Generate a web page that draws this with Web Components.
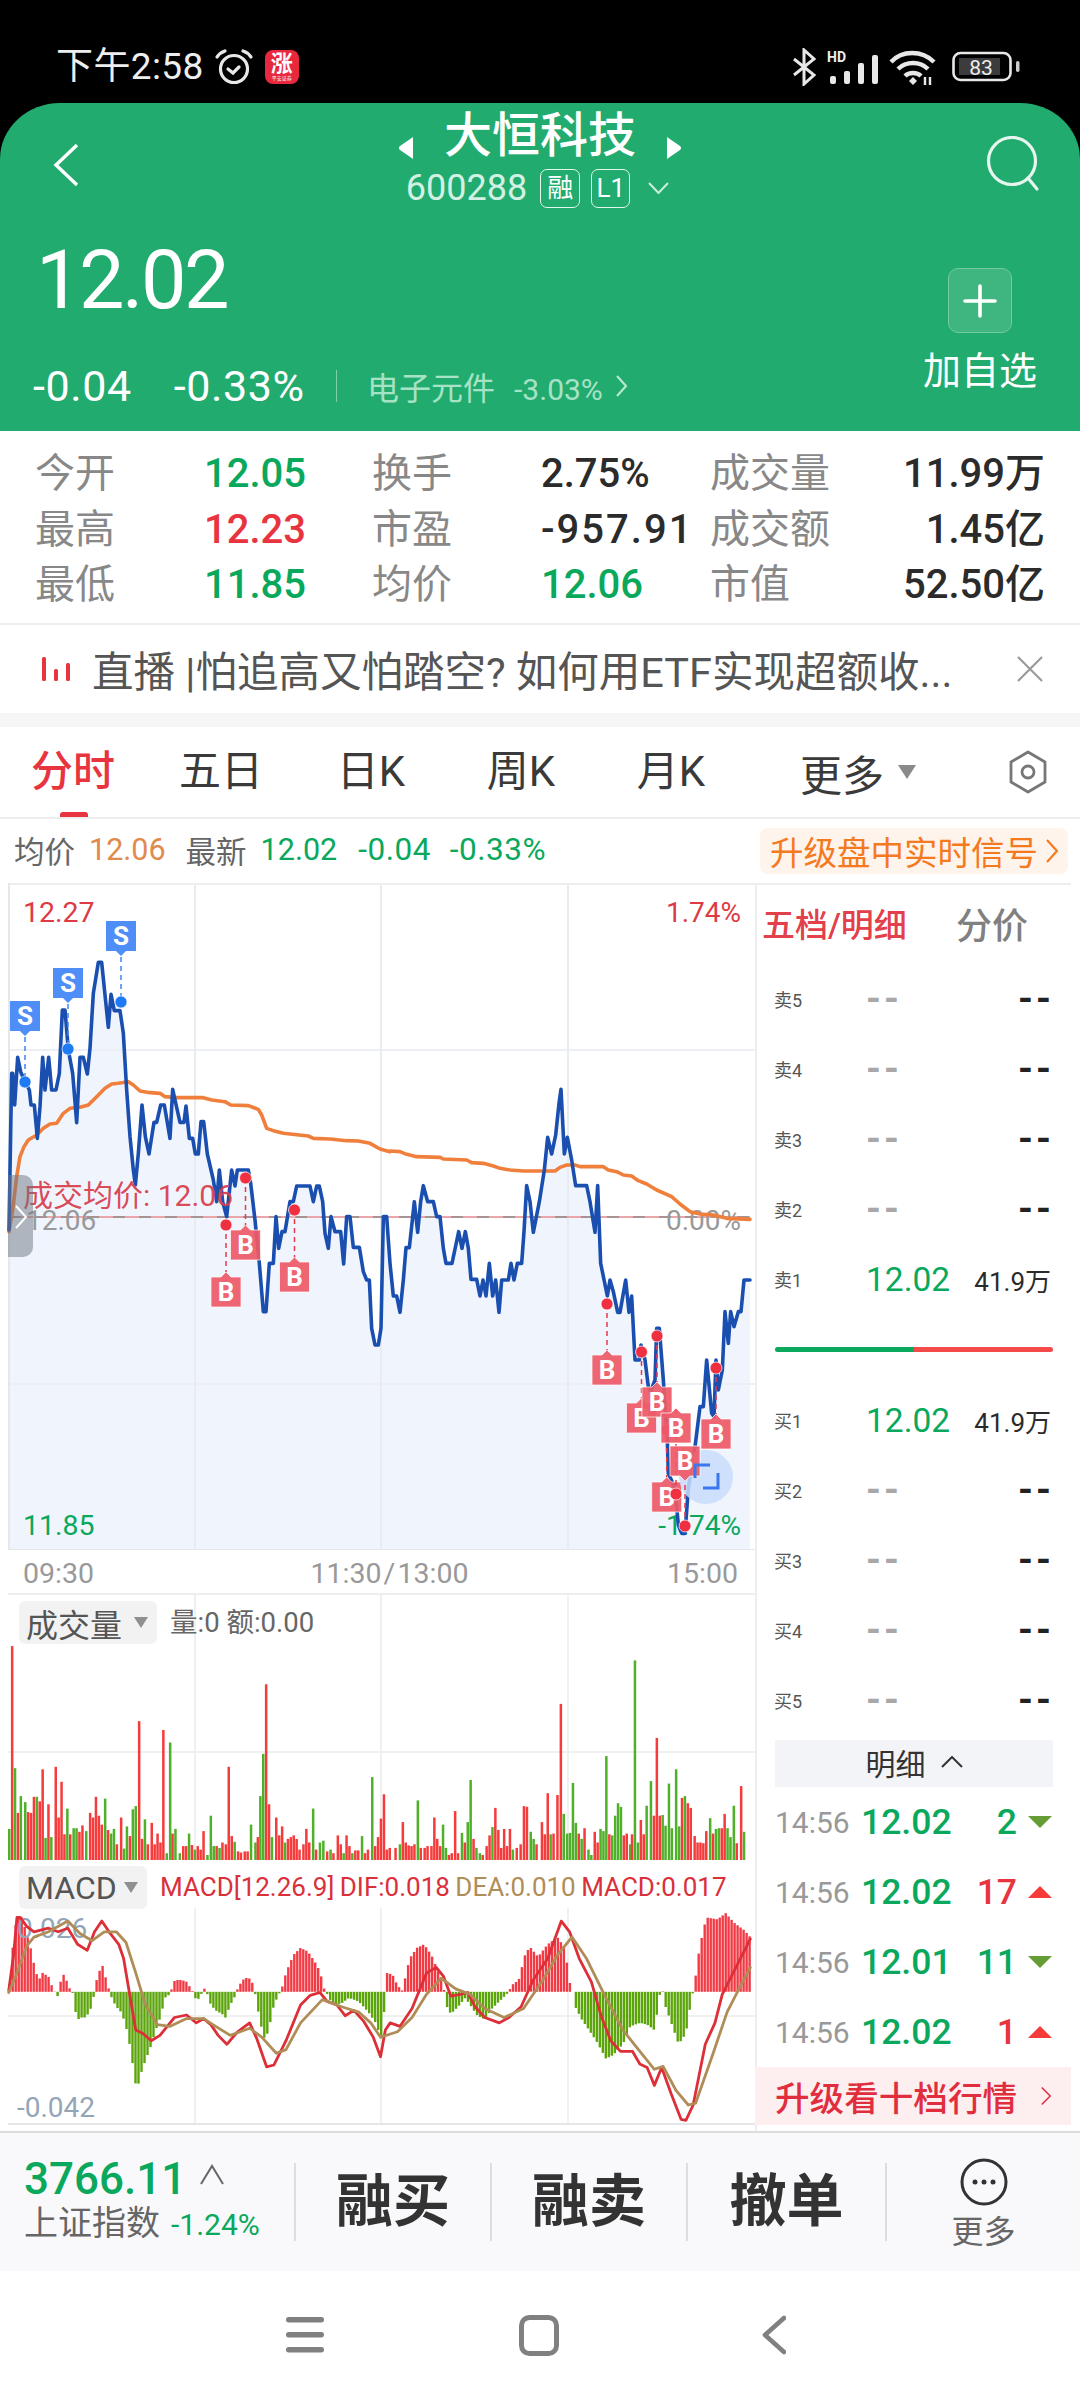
<!DOCTYPE html>
<html lang="zh">
<head>
<meta charset="utf-8">
<title>大恒科技</title>
<style>
html,body{margin:0;padding:0;background:#fff;width:1080px;height:2400px;overflow:hidden}
body{font-family:Roboto,"Noto Sans CJK SC",sans-serif}
</style>
</head>
<body>
<status-bar></status-bar>
<stock-header></stock-header>
<quote-grid>
   <quote-cell label="今开" tone="green">12.05</quote-cell>
   <quote-cell label="换手">2.75%</quote-cell>
   <quote-cell label="成交量" end>11.99万</quote-cell>
   <quote-cell label="最高" tone="red">12.23</quote-cell>
   <quote-cell label="市盈"><span style="letter-spacing:2px">-957.91</span></quote-cell>
   <quote-cell label="成交额" end>1.45亿</quote-cell>
   <quote-cell label="最低" tone="green">11.85</quote-cell>
   <quote-cell label="均价" tone="green">12.06</quote-cell>
   <quote-cell label="市值" end>52.50亿</quote-cell>
</quote-grid>
<news-ticker>直播 |怕追高又怕踏空? 如何用ETF实现超额收...</news-ticker>
<chart-tabs>
   <tab-item active>分时</tab-item>
   <tab-item>五日</tab-item>
   <tab-item>日K</tab-item>
   <tab-item>周K</tab-item>
   <tab-item>月K</tab-item>
</chart-tabs>
<info-row></info-row>
<chart-body>
   <div slot="left">
      <price-chart></price-chart>
      <time-axis></time-axis>
      <volume-chart></volume-chart>
      <macd-chart></macd-chart>
   </div>
   <order-book slot="right"></order-book>
</chart-body>
<bottom-bar>
   <trade-action>融买</trade-action>
   <trade-action>融卖</trade-action>
   <trade-action style="width:199px">撤单</trade-action>
</bottom-bar>
<nav-bar></nav-bar>

<script>
'use strict'
const GREEN = '#09a85c', RED = '#e8343f'

// every element gets its shadow root the same way
class Base extends HTMLElement{
   connectedCallback(){
      if(this.shadowRoot) return
      this.attachShadow({mode:'open'})
      this.shadowRoot.innerHTML = `<style>:host,*{box-sizing:border-box}${this.css()}</style>${this.html()}`
   }
   css(){ return '' }
   html(){ return '<slot></slot>' }
}

customElements.define('status-bar', class extends Base{
   css(){ return `
      :host{display:flex;align-items:center;height:103px;background:#000;color:#eee;padding:31px 0 0 56px}
      .t{font-size:37px;line-height:40px;letter-spacing:.4px;margin-right:9px}
      .app{width:34px;height:34px;border-radius:8px;background:#e8283c;color:#fff;margin-left:10px;display:flex;flex-direction:column;align-items:center;justify-content:center;font-size:22px;font-weight:700;line-height:22px}
      .app small{font-size:5px;line-height:6px;font-weight:400}
      .r{margin-left:auto;margin-right:58px;display:flex;align-items:center}
      svg{display:block}
   `}
   html(){ return `
      <span class="t">下午2:58</span>
      <svg width="42" height="42" viewBox="0 0 42 42" fill="none" stroke="#e8e8e8" stroke-width="3.2" stroke-linecap="round">
         <circle cx="21" cy="23" r="13.5"/><path d="M15 23l5 4 6-6M4 11c2-3 5-5 8-6M38 11c-2-3-5-5-8-6"/>
      </svg>
      <div class="app"><span>涨</span><small>平安证券</small></div>
      <div class="r">
         <svg width="24" height="38" viewBox="0 0 24 38" fill="none" stroke="#e8e8e8" stroke-width="3"><path d="M2 11l20 16-10 9V2l10 9L2 27"/></svg>
         <svg width="60" height="38" viewBox="0 0 60 38" style="margin-left:11px">
            <text x="0" y="14" font-size="14" font-weight="700" fill="#eee" font-family="Roboto">HD</text>
            <g fill="#e8e8e8"><rect x="3" y="28" width="6" height="8" rx="2"/><rect x="17" y="23" width="6" height="13" rx="2"/><rect x="31" y="15" width="6" height="21" rx="2"/><rect x="45" y="7" width="6" height="29" rx="2"/></g>
         </svg>
         <svg width="48" height="38" viewBox="0 0 48 38" fill="none" stroke="#e8e8e8" stroke-width="4.4" style="margin-left:2px">
            <path d="M2 14C13 2 33 2 45 14M9 21c8-8 22-8 30 0M16 28c4-4 12-4 16 0"/><path d="M20 33l4-4 4 4-4 4z" fill="#e8e8e8" stroke="none"/><path d="M36 37v-8m5 8v-8" stroke-width="2.4"/>
         </svg>
         <svg width="70" height="32" viewBox="0 0 70 32" style="margin-left:15px">
            <rect x="1.5" y="2" width="57" height="27" rx="7" fill="none" stroke="#e8e8e8" stroke-width="2.6"/>
            <rect x="7" y="7" width="41" height="17" fill="#3c3c3c"/>
            <text x="29" y="24" font-size="21" text-anchor="middle" fill="#eee" font-family="Roboto">83</text>
            <rect x="64" y="10" width="3.5" height="11" rx="1.7" fill="#ccc"/>
         </svg>
      </div>
   `}
})

customElements.define('stock-header', class extends Base{
   css(){ return `
      :host{display:block;background:#000}
      .box{height:328px;background:#22ab6f;border-radius:60px 60px 0 0/56px 56px 0 0;color:#fff;overflow:hidden}
      .top{display:grid;grid-template-columns:1fr auto 1fr;padding-top:5px}
      .back{margin:35px 0 0 53px}
      .search{margin:28px 40px 0 0;justify-self:end}
      .center{display:flex;flex-direction:column;align-items:center}
      .name{display:flex;align-items:flex-start;gap:30px;height:56px;font-size:48px;line-height:56px;font-weight:500}
      .name svg{margin-top:29px}
      .code{display:flex;align-items:center;height:40px;margin-top:4px;color:#d3f1e2;font-size:36px;margin-right:5px}
      .tag{height:39px;border:1.5px solid #e2f6ec;border-radius:7px;margin-left:11px;font-size:26px;line-height:36px;text-align:center;color:#fff;width:40px}
      .main{display:flex;justify-content:space-between;padding:0 43px 0 33px}
      .price{font-size:81px;line-height:80px;margin:33px 0 0 3px;letter-spacing:-2.5px}
      .sub{display:flex;align-items:center;height:50px;margin-top:40px;font-size:43px;font-weight:400;letter-spacing:.6px}
      .sub .pct{margin-left:42px}
      .sub i{display:block;width:1.5px;height:32px;background:#7fd0aa;margin:0 30px 0 31px}
      .sub .ind{color:#a6e3c6;font-size:32px;letter-spacing:0}
      .sub .ind em{font-style:normal;font-size:30px;margin-left:19px}
      .add{display:flex;flex-direction:column;align-items:center;margin-top:60px}
      .plus{width:64px;height:65px;border-radius:10px;background:#3fb680;border:1.5px solid #72c9a2;display:flex;align-items:center;justify-content:center}
      .lab{font-size:38px;line-height:40px;margin-top:18px}
   `}
   html(){ return `<div class="box">
      <div class="top">
         <svg class="back" width="26" height="44" viewBox="0 0 26 44" fill="none" stroke="#fff" stroke-width="3.4"><path d="M24 2L3 22l21 20"/></svg>
         <div class="center">
            <div class="name">
               <svg width="16" height="22" viewBox="0 0 16 22"><path d="M15 0L2 9a2.500 2.500 0 0 0 0 4l13 9z" fill="#fff"/></svg>
               <span>大恒科技</span>
               <svg width="16" height="22" viewBox="0 0 16 22"><path d="M1 0l13 9a2.500 2.500 0 0 1 0 4L1 22z" fill="#fff"/></svg>
            </div>
            <div class="code">
               <span style="margin-right:2px">600288</span>
               <span class="tag">融</span><span class="tag" style="width:39px">L1</span>
               <svg width="21" height="12" viewBox="0 0 21 12" fill="none" stroke="#cdeedd" stroke-width="2" style="margin-left:18px"><path d="M1 1l9.500 10L20 1"/></svg>
            </div>
         </div>
         <svg class="search" width="54" height="56" viewBox="0 0 54 56" fill="none" stroke="#e6f6ee" stroke-width="3.2"><circle cx="26" cy="25" r="23.500"/><path d="M42 42l9 11" stroke-linecap="round"/></svg>
      </div>
      <div class="main">
         <div>
            <div class="price">12.02</div>
            <div class="sub"><span>-0.04</span><span class="pct">-0.33%</span><i></i><span class="ind">电子元件<em>-3.03%</em></span>
               <svg width="11" height="24" viewBox="0 0 11 24" fill="none" stroke="#bce9d3" stroke-width="2" style="margin-left:13px"><path d="M1 2l9 10-9 10"/></svg>
            </div>
         </div>
         <div class="add">
            <div class="plus"><svg width="34" height="34" viewBox="0 0 34 34" stroke="#fff" stroke-width="3.6" stroke-linecap="round"><path d="M17 2v30M2 17h30"/></svg></div>
            <div class="lab">加自选</div>
         </div>
      </div>
   </div>`}
})

customElements.define('quote-grid', class extends Base{
   css(){ return `:host{display:grid;grid-template-columns:337px 338px 335px;grid-auto-rows:55.5px;height:194px;padding:15px 0 0 35px;border-bottom:2px solid #eee;background:#fff}` }
})

customElements.define('quote-cell', class extends Base{
   css(){
      const tone = this.getAttribute('tone')
      const color = tone === 'green' ? GREEN : tone === 'red' ? RED : '#2b2b2b'
      return `
      :host{display:flex;align-items:center;font-size:40px;line-height:55px}
      .l{width:169px;color:#888;flex:none}
      .v{color:${color};flex:1;font-weight:500;${this.hasAttribute('end') ? 'text-align:right' : ''}}
   `}
   html(){ return `<span class="l">${this.getAttribute('label')}</span><span class="v"><slot></slot></span>` }
})

customElements.define('news-ticker', class extends Base{
   css(){ return `
      :host{display:flex;align-items:center;height:102px;border-bottom:14px solid #f6f6f6;padding-left:42px;background:#fff;font-size:41.5px;color:#555}
      .x{margin-left:auto;margin-right:37px}
      .txt{margin-left:22px;white-space:nowrap}
   `}
   html(){ return `
      <svg width="28" height="24" viewBox="0 0 28 24" fill="#e8343f"><rect x="0" y="0" width="4" height="24" rx="1.500"/><rect x="12" y="12" width="4" height="12" rx="1.500"/><rect x="24" y="6" width="4" height="18" rx="1.500"/></svg>
      <span class="txt"><slot></slot></span>
      <svg class="x" width="26" height="26" viewBox="0 0 26 26" stroke="#9a9a9a" stroke-width="2.200" fill="none"><path d="M1 1l24 24M25 1L1 25"/></svg>
   `}
})

customElements.define('chart-tabs', class extends Base{
   css(){ return `
      :host{display:flex;align-items:center;height:92px;border-bottom:2px solid #eee;background:#fff;font-size:42px;color:#3a3a3a}
      .more{display:flex;align-items:center;margin-left:54px}
      .hex{margin-left:auto;margin-right:32px}
   `}
   html(){ return `
      <slot></slot>
      <span class="more">更多<svg width="18" height="14" viewBox="0 0 18 14" style="margin-left:14px"><path d="M0 0h18l-9 14z" fill="#8a8a8a"/></svg></span>
      <svg class="hex" width="40" height="44" viewBox="0 0 40 44" fill="none" stroke="#777" stroke-width="2.800"><path d="M20 2l17 10v20L20 42 3 32V12z" stroke-linejoin="round"/><circle cx="20" cy="22" r="6"/></svg>
   `}
})

customElements.define('tab-item', class extends Base{
   css(){
      const on = this.hasAttribute('active')
      return `
      :host{display:block;position:relative;width:150px;text-align:center;line-height:90px;height:90px;${on ? 'color:#e8343f;width:146px;font-weight:500' : ''}}
      ${on ? ':host::after{content:"";position:absolute;left:60px;bottom:0;width:28px;height:5px;border-radius:3px 3px 0 0;background:#e8343f}' : ''}
   `}
})

customElements.define('info-row', class extends Base{
   css(){ return `
      :host{display:flex;align-items:center;height:64px;padding:0 12px 1px 14px;font-size:30.5px;color:#666;background:#fff;white-space:nowrap}
      span{display:block}
      .head{margin-top:-2px}
      .o{color:#e08a4e;margin:-2px 20px 0 14px}
      .g{color:${GREEN};margin:-2px 0 0 21px}
      .w{font-size:31.5px;letter-spacing:.5px}
      .btn{margin-left:auto;display:flex;align-items:center;height:46px;background:#fff4ec;border-radius:8px;color:#f5791f;font-size:33.5px;padding:0 8px 0 10px;width:308px}
   `}
   html(){ return `
      <span class="head">均价</span><span class="o">12.06</span><span class="head">最新</span><span class="g" style="margin-left:14px">12.02</span><span class="g w">-0.04</span><span class="g w" style="margin-left:19px">-0.33%</span>
      <div class="btn"><span>升级盘中实时信号</span><svg width="12" height="26" viewBox="0 0 12 26" fill="none" stroke="#f5791f" stroke-width="2.200" style="margin-left:8px"><path d="M1 2l10 11L1 24"/></svg></div>
   `}
})

customElements.define('chart-body', class extends Base{
   css(){ return `
      :host{display:flex;height:1248px;background:#fff}
      .l{display:block;width:755px;flex:none}
      .r{display:block;width:316px;flex:none}
   `}
   html(){ return `<div class="l"><slot name="left"></slot></div><div class="r"><slot name="right"></slot></div>` }
})

/* helpers for the svg charts, all drawn in page coordinates so the numbers can be read off the reference */
const pairs = (s, f) => s.trim().split(/\s+/).map(p => { const a = p.split(',').map(Number); return f(a[0], a[1]) })
const poly = (pts, c, w) => `<polyline points="${pts.map(p => p.join(',')).join(' ')}" fill="none" stroke="${c}" stroke-width="${w}" stroke-linejoin="round" stroke-linecap="round"/>`
const hline = (y, x1, x2, c, w) => `<line x1="${x1}" y1="${y}" x2="${x2}" y2="${y}" stroke="${c}" stroke-width="${w || 2}"/>`
const vline = (x, y1, y2, c, w) => `<line x1="${x}" y1="${y1}" x2="${x}" y2="${y2}" stroke="${c}" stroke-width="${w || 2}"/>`
const txt = (x, y, s, c, size, anchor, extra) => `<text x="${x}" y="${y}" fill="${c}" font-size="${size}" text-anchor="${anchor || 'start'}" font-family="Roboto,'Noto Sans CJK SC',sans-serif" ${extra || ''}>${s}</text>`

const BLUE_A = pairs(`27,840 35,370 38,370 44,465 53,322 62,365 75,395 88,420 93,465 103,465 112,565 120,470 128,322 135,420 146,322 155,420 168,420 178,370 187,180 195,180 205,300 218,370 230,518 240,322 250,322 262,372 270,295 280,130 295,37 305,37 325,232 333,133 343,182 360,182 370,250 380,420 390,560 400,660 406,705 415,610 426,465 436,560 447,612 462,517 470,517 482,465 493,465 510,565 518,418 540,517 552,517 558,468 568,565 578,565 586,612 595,612 603,515 611,515 622,612 640,690 650,755 658,660 668,755 680,800 695,660 705,708 712,660 745,660 752,700 765,810 778,940 790,1085 798,1085 808,940 820,940 828,800 836,895 846,845 855,845 870,755 880,755 890,708 930,708 940,755 950,708 958,708 968,755 975,850 985,895 993,800 1005,845 1022,845 1031,942 1040,800 1050,800 1060,892 1078,892 1090,965 1100,990 1108,990 1115,1135 1125,1185 1135,1185 1143,1135`, (x, y) => [x / 3, 950 + y / 3])
const BLUE_B = pairs(`10,470 20,470 30,610 40,708 50,708 60,757 70,660 78,563 88,563 103,425 113,517 122,425 130,377 143,425 160,425 170,470 180,470 190,565 198,610 216,610 236,515 246,565 256,515 265,565 273,658 290,658 300,708 309,660 318,708 328,610 338,708 347,660 357,757 365,660 385,660 393,610 402,660 412,610 425,610 432,515 440,377 450,425 460,517 478,425 493,330 503,232 515,282 527,225 537,130 543,88 553,282 562,232 575,300 587,377 620,377 630,425 645,517 653,377 662,610 682,708 690,660 700,695 713,757 720,757 737,660 747,757 755,708`, (x, y) => [380 + x / 3, 1060 + y / 3])
const BLUE_C = pairs(`225,360 238,360 243,315 255,360 265,440 272,455 285,420 290,265 298,265 310,420 322,600 325,700 345,745 355,855 365,880 375,880 385,745 405,620 420,500 430,500 440,360 455,520 462,530 468,360 475,450 487,390 495,215 505,310 512,215 522,260 535,215 543,215 552,120 570,120`, (x, y) => [560 + x / 3, 1240 + y / 3])
const BLUE = [...BLUE_A, ...BLUE_B, ...BLUE_C]
const ORANGE = [
   ...pairs(`27,845 38,780 50,680 60,620 72,590 85,570 110,555 130,535 150,522 170,520 190,490 210,475 240,472 265,465 290,440 315,415 335,402 355,400 385,395 400,405 420,423 450,428 480,430 495,440 530,443 610,443 635,450 675,455 692,465 745,467 775,478 785,495 800,535 820,542 850,550 925,558 940,565 990,567 1040,572 1075,573 1110,580 1140,597 1170,605`, (x, y) => [x / 3, 950 + y / 3]),
   ...pairs(`30,273 60,275 80,283 110,290 180,292 190,297 260,300 275,308 310,310 340,318 360,325 390,330 430,333 525,333 540,322 560,315 585,315 600,320 670,320 685,330 710,335 730,345 755,348 775,362 800,372 830,390 875,410 900,432 930,455 960,462 1000,465 1040,475 1110,478`, (x, y) => [380 + x / 3, 1060 + y / 3])
]

const sFlag = (cx, top, dotY) => `
   <line x1="${cx}" y1="${top + 36}" x2="${cx}" y2="${dotY}" stroke="#3d86ee" stroke-width="1.500" stroke-dasharray="5 4"/>
   <circle cx="${cx}" cy="${dotY}" r="6" fill="#1e7bf5" stroke="#fff" stroke-opacity=".6"/>
   <path d="M${cx - 15} ${top}h30v30h-10l-5 5-5-5h-10z" fill="#4f8ef7"/>
   ${txt(cx, top + 24, 'S', '#fff', 26, 'middle', 'font-weight="700"')}`
const bFlag = (cx, top, dotY, down, dashTo) => `
   <line x1="${cx}" y1="${dashTo || dotY}" x2="${cx}" y2="${down ? top + 34 : top - 4}" stroke="#e8394a" stroke-width="1.500" stroke-dasharray="5 4"/>
   <path d="${down ? `M${cx - 15} ${top}h30v30h-10l-5 5-5-5h-10z` : `M${cx - 15} ${top}h10l5-5 5 5h10v30h-30z`}" fill="#ee5a68" fill-opacity=".93" stroke="#fff" stroke-opacity=".7"/>
   ${txt(cx, top + 24, 'B', '#fff', 26, 'middle', 'font-weight="700"')}
   <circle cx="${cx}" cy="${dotY}" r="6" fill="#ee3040" stroke="#fff" stroke-opacity=".7"/>`

customElements.define('price-chart', class extends Base{
   css(){ return `:host{display:block;height:667px}svg{display:block}` }
   html(){
      const fill = BLUE.map(p => p.join(',')).join(' ') + ' 750,1550 9,1550'
      const grid = [1050, 1384].map(y => hline(y, 8, 755, '#eceff3')).join('') +
         [195, 381, 568].map(x => vline(x, 883, 1550, '#e8ebf0')).join('')
      return `<svg width="755" height="667" viewBox="0 883 755 667">
         <polygon points="${fill}" fill="#eff4fd"/>
         ${grid}
         ${hline(884, 8, 755, '#eee')}${hline(1550, 8, 755, '#e4e6ea')}${vline(9, 883, 1550, '#e4e8ee')}
         ${hline(1217, 9, 750, '#e9a5aa')}
         <line x1="9" y1="1217" x2="750" y2="1217" stroke="#8a8a8a" stroke-width="2" stroke-dasharray="12 14" stroke-opacity=".7"/>
         ${txt(23, 922, '12.27', '#dd3a46', 28.5)}${txt(741, 922, '1.74%', '#dd3a46', 28, 'end')}
         ${txt(23, 1535, '11.85', GREEN, 28.5)}${txt(741, 1535, '-1.74%', GREEN, 28, 'end')}
         ${txt(26, 1230, '12.06', '#999', 28)}${txt(741, 1230, '0.00%', '#999', 28, 'end')}
         ${poly(ORANGE, '#f07f3c', 3.6)}
         ${poly(BLUE, '#1a4fb0', 3.6)}
         ${txt(23, 1206, '成交均价: 12.06', '#d8404d', 30, 'start', 'fill-opacity=".95"')}
         <path d="M8 1175h15a10 10 0 0 1 10 10v62a10 10 0 0 1-10 10H8z" fill="#6f7580" fill-opacity=".5"/>
         <path d="M16 1206l10 11-10 11" fill="none" stroke="#fff" stroke-width="2"/>
         ${sFlag(25, 1001, 1082)}${sFlag(68, 968, 1049)}${sFlag(121, 921, 1002)}
         ${bFlag(226, 1277, 1225)}${bFlag(245.5, 1230, 1178)}${bFlag(294.5, 1262, 1210)}
         ${bFlag(607, 1355, 1304)}${bFlag(641.5, 1403, 1352)}${bFlag(666.7, 1482, 1430)}${bFlag(657, 1387, 1336)}${bFlag(676, 1413, 1494, false)}${bFlag(716, 1419, 1368)}
         <circle cx="706" cy="1477" r="27" fill="#c9dcfb" fill-opacity=".85"/>
         ${bFlag(685, 1446, 1526, true)}
         <path d="M695 1478v-13h15M718 1473v15h-15" fill="none" stroke="#3b78f0" stroke-width="3"/>
      </svg>`
   }
})

customElements.define('time-axis', class extends Base{
   css(){ return `
      :host{display:flex;justify-content:space-between;height:45px;padding:6px 17px 0 15px;font-size:28.5px;line-height:36px;color:#999;border-bottom:2px solid #eee;margin-left:8px}
      .mid{margin-left:18px;word-spacing:-5px}
   `}
   html(){ return `<span>09:30</span><span class="mid">11:30 / 13:00</span><span>15:00</span>` }
})

customElements.define('chart-chip', class extends Base{
   css(){ return `
      :host{display:flex;align-items:center;justify-content:space-between;height:43px;padding:0 9px 0 7px;background:#f2f2f2;border-radius:6px;font-size:32px;color:#555;position:absolute;top:6px;left:19px}
   `}
   html(){ return `<slot></slot><svg width="14" height="11" viewBox="0 0 14 11"><path d="M0 0h14L7 11z" fill="#8f8f8f"/></svg>` }
})

const VOL = `g19,697 r25,185 g31,527 r37,652 g43,605 g52,622 r58,650 r64,652 r70,607 g76,607 r82,620 r88,530 g94,722 r100,628 g106,720 r115,523 r121,665 r127,565 r133,712 g139,640 r145,712 g152,695 g158,695 r164,705 r170,687 g178,703 r186,652 r192,665 r198,607 r204,660 r210,685 g217,612 r223,700 g229,710 g235,697 r241,740 r250,665 g256,752 g262,690 r268,717 g274,642 g280,633 r287,395 r293,725 g299,670 r305,740 r313,680 r319,740 r325,710 r331,735 r337,420 g344,765 g351,455 r356,710 g362,697 g371,765 r378,745 r384,745 g390,710 r396,742 g402,755 r408,745 r414,755 r420,703 g428,770 g435,660 g441,745 r447,745 g453,750 r459,735 r466,740 r472,523 r478,717 g484,733 r491,760 r497,763 r505,760 r511,760 g518,685 g527,735 r532,720 g537,605 g543,487 r549,292 r555,628 g561,720 r570,665 r576,715 r582,690 g588,735 r594,725 r600,720 r606,715 r612,725 r618,755 r626,740 r632,697 r638,735 g646,640 r652,755 g660,735 g667,730 r675,760 g682,755 r688,765 r697,715 r703,740 g709,765 r715,715 r721,745 g727,765 r733,757 r739,757 g747,717 r753,765 r759,755 g768,552 r774,745 r780,720 r786,668 r792,600 r798,755 r804,750 r816,750 g825,740 r831,678 r837,735 r843,743 r849,745 r855,740 g862,617 r868,750 r876,750 r882,745 r890,745 r896,665 r902,725 r908,745 g914,685 g920,750 r926,770 r932,765 r939,647 r945,765 g953,708 r959,735 g965,678 g971,560 r977,725 g983,750 g990,765 r996,770 r1004,745 r1010,715 g1016,692 r1022,638 r1028,700 r1034,750 r1040,697 r1046,745 r1052,697 g1058,755 r1066,750 r1074,740 r1081,633 r1087,635 g1095,705 g1101,725 r1107,740 r1118,678 r1124,712 r1130,597 g1136,712 r1142,710 r1150,602 r1157,347 g1163,655 g1170,710 g1176,708 g1182,568 g1188,680 r1194,710 g1200,725 r1206,695 g1214,755 g1220,770 r1227,705 r1233,735 g1239,697 g1245,703 g1251,493 r1257,712 g1263,715 g1269,660 g1275,625 g1281,635 r1287,715 r1293,710 g1300,740 r1304,712 g1310,225 g1316,735 r1322,672 r1328,712 g1334,632 g1343,563 r1349,660 r1355,442 r1361,660 g1367,658 g1373,688 g1380,570 g1386,695 g1395,530 g1401,690 r1407,610 g1413,605 r1419,625 r1425,638 r1433,717 r1439,735 r1445,735 r1451,737 r1457,703 g1465,667 r1471,710 g1477,697 g1483,695 r1489,695 r1495,655 g1501,695 g1507,720 g1514,632 r1520,737 r1529,577 g1535,705`

customElements.define('volume-chart', class extends Base{
   css(){ return `
      :host{display:block;position:relative;height:265px}
      svg{display:block}
      .lab{position:absolute;left:170px;top:10px;font-size:27.5px;line-height:36px;color:#666;white-space:nowrap}
   `}
   html(){
      const bars = VOL.split(' ').map(b => {
         const m = b.match(/([rg])(\d+),(\d+)/)
         const x = m[2] / 2.063, top = 1580 + m[3] / 2.8
         return `<rect x="${(x - 1.25).toFixed(1)}" y="${top.toFixed(1)}" width="2.5" height="${(1860 - top).toFixed(1)}" fill="${m[1] === 'r' ? '#f53b3b' : '#4fb02a'}"/>`
      }).join('')
      return `<svg width="755" height="265" viewBox="0 1595 755 265">
         ${hline(1752, 8, 755, '#f0f0f0')}
         ${[195, 381, 568].map(x => vline(x, 1595, 1860, '#f0f0f0')).join('')}
         ${bars}
      </svg>
      <chart-chip style="width:138px">成交量</chart-chip>
      <span class="lab">量:0 额:0.00</span>`
   }
})

const HIST = `18:1153 20:1130 28:1000 35:945 45:945 55:990 65:1040 72:1090 80:1120 88:1100 100:1110 108:1140 113:1153 114:1165 122:1165 124:1153 125:1125 133:1100 140:1135 148:1153 152:1160 158:1235 165:1225 175:1225 185:1210 192:1175 195:1153 197:1130 205:1095 212:1080 220:1125 226:1153 232:1175 240:1195 250:1210 258:1240 265:1280 272:1340 282:1432 290:1385 300:1345 310:1310 320:1265 332:1220 340:1170 350:1160 353:1153 356:1125 365:1120 375:1120 385:1125 392:1140 398:1153 400:1165 407:1178 415:1160 418:1153 420:1140 425:1153 428:1160 435:1190 445:1205 458:1215 465:1225 475:1190 485:1165 488:1153 490:1145 500:1120 512:1112 520:1125 526:1153 528:1170 537:1240 547:1290 555:1255 565:1190 575:1160 578:1153 580:1150 590:1100 605:1050 620:1030 635:1040 650:1070 660:1095 670:1150 674:1153 677:1170 690:1190 705:1185 720:1170 740:1180 760:1210 775:1240 788:1290 795:1165 796:1153 798:1100 810:1105 820:1135 830:1150 845:1060 860:1030 875:1020 890:1050 905:1100 915:1145 918:1153 920:1190 930:1215 945:1195 960:1170 970:1190 985:1220 1000:1230 1015:1200 1030:1180 1045:1160 1050:1153 1055:1135 1070:1120 1085:1040 1095:1030 1110:1055 1130:1020 1150:1000 1165:1030 1178:1150 1182:1153 1185:1190 1200:1230 1215:1260 1230:1290 1250:1340 1265:1330 1285:1300 1300:1250 1320:1240 1335:1245 1350:1260 1358:1190 1362:1153 1365:1148 1368:1153 1372:1190 1385:1240 1400:1300 1415:1270 1428:1160 1431:1153 1433:1130 1443:1030 1457:945 1480:950 1497:933 1515:960 1535:980 1548:1000`.split(' ').map(s => s.split(':').map(Number))
const histAt = x => {
   for(let i = 1; i < HIST.length; i++){
      if(x <= HIST[i][0]){
         const a = HIST[i - 1], b = HIST[i]
         return a[1] + (b[1] - a[1]) * (x - a[0]) / (b[0] - a[0])
      }
   }
   return HIST[HIST.length - 1][1]
}
const macdMap = (x, y) => [x / 2.063, 1580 + y / 2.8]
const DIF = pairs(`18,1150 28,1050 35,945 42,945 55,970 70,985 100,975 120,985 140,975 160,1020 180,1037 195,985 210,955 225,985 245,1020 255,1060 265,1140 280,1260 295,1270 312,1290 330,1275 345,1250 360,1225 385,1218 405,1240 420,1228 435,1245 450,1275 468,1300 490,1265 515,1240 530,1285 550,1363 565,1358 590,1290 620,1190 640,1163 660,1155 675,1180 695,1190 712,1220 730,1205 750,1235 770,1280 785,1335 795,1260 805,1240 825,1250 850,1200 880,1100 900,1085 915,1110 930,1165 950,1160 965,1155 980,1195 1000,1225 1030,1240 1050,1225 1075,1195 1100,1120 1130,1060 1158,955 1175,985 1195,1060 1220,1125 1240,1220 1260,1290 1280,1320 1305,1320 1320,1355 1335,1365 1350,1415 1365,1365 1385,1440 1405,1510 1415,1513 1430,1470 1455,1300 1475,1240 1490,1160 1520,1080 1548,1005`, macdMap)
const DEA = pairs(`18,1155 35,1100 55,1025 70,1000 100,985 140,955 165,990 190,1010 215,985 240,985 260,1015 280,1100 300,1190 325,1245 350,1250 385,1228 420,1228 445,1250 475,1275 515,1255 540,1280 570,1325 590,1315 620,1240 665,1175 705,1195 740,1210 765,1240 785,1280 820,1265 850,1225 880,1160 910,1115 940,1145 970,1160 1000,1200 1040,1225 1080,1200 1120,1120 1150,1050 1180,1000 1210,1060 1250,1170 1285,1260 1320,1320 1350,1370 1368,1362 1395,1430 1420,1470 1435,1465 1470,1330 1500,1210 1530,1130 1548,1085`, macdMap)

customElements.define('macd-chart', class extends Base{
   css(){ return `
      :host{display:block;position:relative;height:265px}
      svg{display:block}
      .lab{position:absolute;left:160px;top:9px;font-size:26px;line-height:36px;color:#d9303a;white-space:nowrap;word-spacing:-1px}
      .lab b{font-weight:400;color:#b08d57}
   `}
   html(){
      let bars = ''
      for(let zx = 20; zx < 1550; zx += 6.18){
         const y = histAt(zx), x = zx / 2.063, real = 1580 + y / 2.8, zero = 1580 + 1153 / 2.8
         const up = real < zero
         bars += `<rect x="${(x - 1.2).toFixed(1)}" y="${Math.min(real, zero).toFixed(1)}" width="2.4" height="${Math.abs(real - zero).toFixed(1)}" fill="${up ? '#f23a45' : '#5ba40a'}"/>`
      }
      return `<svg width="755" height="265" viewBox="0 1860 755 265">
         ${hline(2016, 8, 755, '#f0f0f0')}
         ${[195, 381, 568].map(x => vline(x, 1908, 2124, '#f0f0f0')).join('')}
         ${hline(2124, 8, 755, '#e4e6ea')}
         ${bars}
         ${txt(17, 1938, '0.026', '#94a5b8', 28)}
         ${txt(17, 2117, '-0.042', '#94a5b8', 28)}
         ${poly(DIF, '#dd2f38', 2.8)}
         ${poly(DEA, '#b08d57', 2.8)}
      </svg>
      <chart-chip style="width:128px;top:6px">MACD</chart-chip>
      <span class="lab">MACD[12.26.9] DIF:0.018 <b>DEA:0.010</b> MACD:0.017</span>`
   }
})

customElements.define('book-row', class extends Base{
   css(){ return `
      :host{display:grid;grid-template-columns:92px 1fr auto;align-items:center;height:70px;padding:0 20px 0 19px;color:#2b2b2b}
      .s{font-size:18px;color:#555}
      .p{font-size:33.5px;color:${GREEN}}
      .v{font-size:26px}
      .d{font-size:38px;line-height:40px;font-weight:700;letter-spacing:3px;margin-right:-3px}
      .p.d{color:#a8a8a8;}
      .v.d{color:#222}
   `}
   html(){
      const price = this.getAttribute('price')
      return price
         ? `<span class="s">${this.getAttribute('side')}</span><span class="p">${price}</span><span class="v">41.9万</span>`
         : `<span class="s">${this.getAttribute('side')}</span><span class="p d">--</span><span class="v d">--</span>`
   }
})

customElements.define('tick-row', class extends Base{
   css(){
      const up = this.hasAttribute('up')
      return `
      :host{display:grid;grid-template-columns:86px auto 1fr 24px;align-items:center;height:70px;padding:0 19px 0 20px}
      .t{font-size:30px;color:#999}
      .p{font-size:35.5px;color:${GREEN};font-weight:500}
      .q{font-size:35.5px;font-weight:500;text-align:right;margin-right:11px;color:${up ? RED : GREEN}}
   `}
   html(){
      const up = this.hasAttribute('up')
      return `<span class="t">14:56</span><span class="p">${this.getAttribute('price')}</span><span class="q">${this.getAttribute('qty')}</span>
         <svg width="24" height="12" viewBox="0 0 24 12"><path d="${up ? 'M12 0l12 12H0z' : 'M0 0h24L12 12z'}" fill="${up ? '#f63a3a' : '#659c35'}"/></svg>`
   }
})

customElements.define('order-book', class extends Base{
   css(){ return `
      :host{display:block;height:1248px;border-top:2px solid #eee;box-shadow:inset 2px 0 #eee;background:#fff}
      .head{display:flex;align-items:center;height:79px;padding:0 0 4px 7px;white-space:nowrap}
      .head .a{font-size:33px;color:#e2404a;font-weight:500}
      .head .b{font-size:36px;color:#808080;font-weight:500;margin-left:49px}
      .bar{height:71px;display:flex;align-items:center;padding:0 18px 0 20px}
      .bar i{display:block;height:5px;flex:1;background:#09a85c;border-radius:3px 0 0 3px}
      .bar i+i{background:#f54a4a;border-radius:0 3px 3px 0}
      .fold{display:flex;align-items:center;justify-content:center;height:47px;margin:5px 18px 0 20px;background:#f3f4f8;font-size:30px;color:#333;padding-bottom:3px}
      .up{display:flex;align-items:center;height:58px;background:#fdeef0;color:#e02e3e;font-size:34.6px;padding:0 20px;font-weight:500;white-space:nowrap}
   `}
   html(){ return `
      <div class="head"><span class="a">五档/明细</span><span class="b">分价</span></div>
      <book-row side="卖5"></book-row><book-row side="卖4"></book-row><book-row side="卖3"></book-row><book-row side="卖2"></book-row>
      <book-row side="卖1" price="12.02"></book-row>
      <div class="bar"><i></i><i></i></div>
      <book-row side="买1" price="12.02"></book-row>
      <book-row side="买2"></book-row><book-row side="买3"></book-row><book-row side="买4"></book-row><book-row side="买5"></book-row>
      <div class="fold"><span>明细</span><svg width="22" height="12" viewBox="0 0 22 12" fill="none" stroke="#333" stroke-width="2" style="margin-left:15px"><path d="M1 11L11 1l10 10"/></svg></div>
      <tick-row price="12.02" qty="2"></tick-row>
      <tick-row price="12.02" qty="17" up></tick-row>
      <tick-row price="12.01" qty="11"></tick-row>
      <tick-row price="12.02" qty="1" up></tick-row>
      <div class="up"><span>升级看十档行情</span><svg width="13" height="24" viewBox="0 0 13 24" fill="none" stroke="#e02e3e" stroke-width="2" style="margin-left:24px"><path d="M1 1l11 11L1 23"/></svg></div>
   `}
})

customElements.define('trade-action', class extends Base{
   css(){ return `
      :host{display:block;width:196px;height:78px;border-left:2px solid #ddd;text-align:center;font-size:57px;line-height:78px;font-weight:700;color:#333}
   `}
})

customElements.define('bottom-bar', class extends Base{
   css(){ return `
      :host{display:flex;align-items:center;height:140px;border-top:2px solid #ddd;background:#f9f9fb;padding-left:24px}
      .idx{width:270px;margin-top:-4px}
      .p{display:flex;align-items:center;height:46px;font-size:44px;line-height:46px;color:${GREEN};font-weight:500}
      .n{display:flex;align-items:baseline;height:42px;font-size:34px;line-height:42px;color:#666;white-space:nowrap}
      .n em{font-style:normal;font-size:30px;color:${GREEN};margin-left:11px}
      .more{flex:1;height:78px;border-left:2px solid #ddd;display:flex;flex-direction:column;align-items:center;color:#666;font-size:32px;line-height:36px}
      .more svg{margin-top:-5px;flex:none}
      .more span{margin-top:8px;flex:none}
   `}
   html(){ return `
      <div class="idx">
         <div class="p"><span>3766.11</span><svg width="24" height="22" viewBox="0 0 24 22" fill="none" stroke="#666" stroke-width="2" style="margin:0 0 8px 14px"><path d="M1 20L12 2l11 18"/></svg></div>
         <div class="n">上证指数<em>-1.24%</em></div>
      </div>
      <slot></slot>
      <div class="more">
         <svg width="48" height="48" viewBox="0 0 48 48" fill="none" stroke="#333" stroke-width="3"><circle cx="24" cy="24" r="22"/><g fill="#333" stroke="none"><circle cx="15" cy="24" r="2.500"/><circle cx="24" cy="24" r="2.500"/><circle cx="33" cy="24" r="2.500"/></g></svg>
         <span>更多</span>
      </div>
   `}
})

customElements.define('nav-bar', class extends Base{
   css(){ return `
      :host{display:flex;align-items:center;justify-content:center;height:130px;background:#fff;padding:0 9px 2px 0}
      svg{display:block}
   `}
   html(){ return `
      <svg width="38" height="36" viewBox="0 0 38 36" fill="#808080"><rect y="0" width="38" height="5.500" rx="2.700"/><rect y="15" width="38" height="5.500" rx="2.700"/><rect y="30" width="38" height="5.500" rx="2.700"/></svg>
      <svg width="40" height="41" viewBox="0 0 40 41" fill="none" stroke="#808080" stroke-width="5" style="margin-left:195px"><rect x="2.500" y="2.500" width="35" height="36" rx="8"/></svg>
      <svg width="24" height="40" viewBox="0 0 24 40" fill="none" stroke="#808080" stroke-width="4.600" stroke-linecap="round" stroke-linejoin="round" style="margin-left:203px"><path d="M22 3L3 20l19 17"/></svg>
   `}
})
</script>
</body>
</html>
